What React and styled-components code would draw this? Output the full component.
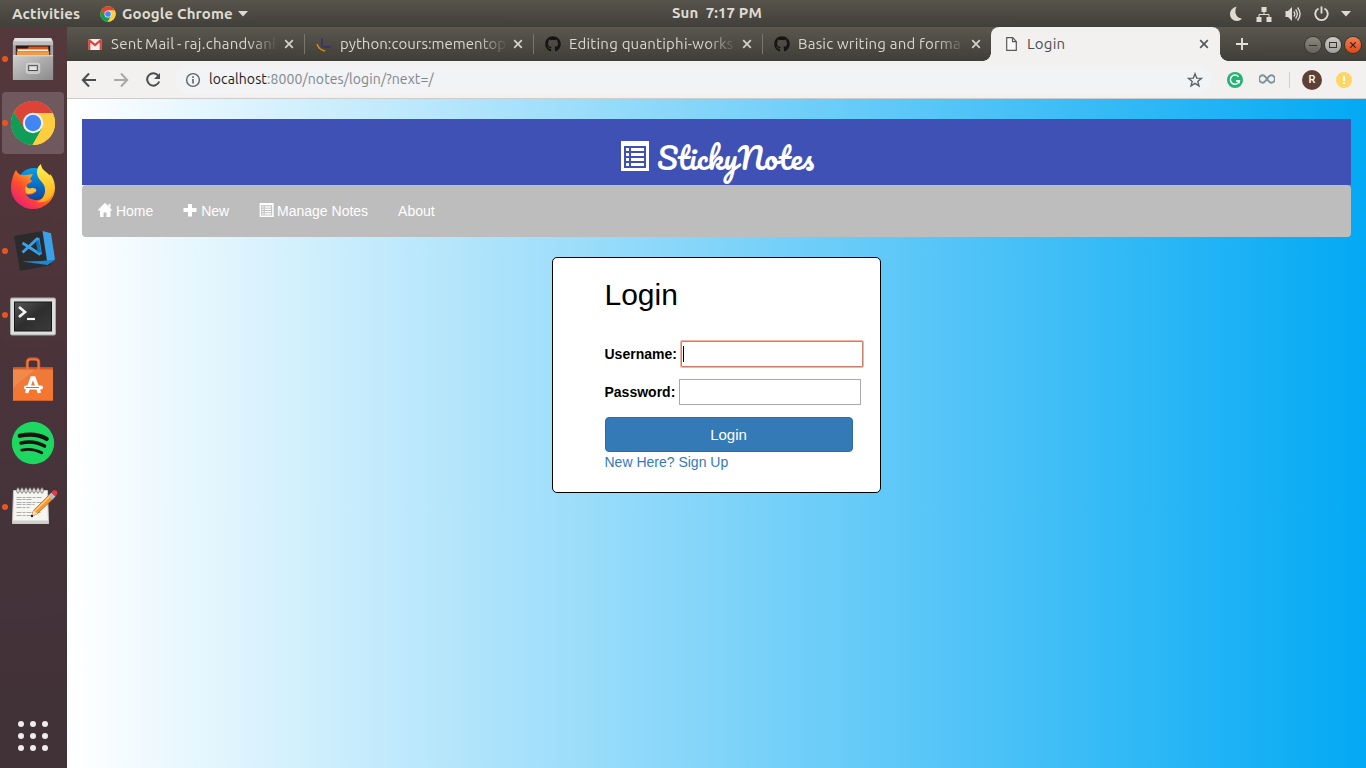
import React from 'react';
import styled, { createGlobalStyle, css } from 'styled-components';
import { FaGithub } from 'react-icons/fa';

const uiFont = '"Ubuntu", "Noto Sans", sans-serif';
const pageFont = '"Liberation Sans", Arial, sans-serif';

const Global = createGlobalStyle`
  *, *::before, *::after { box-sizing: border-box; }
  body { margin: 0; overflow: hidden; }
  svg { display: block; flex: none; }
`;

const Desktop = styled.div`
  width: 1366px;
  height: 768px;
  display: flex;
  flex-direction: column;
  font-family: ${uiFont};
`;

/* ---------- system bar ---------- */
const SystemBar = styled.header`
  height: 27px;
  flex: none;
  display: flex;
  align-items: center;
  padding: 0 15px 0 12px;
  background: linear-gradient(#57544b, #403f39);
  color: #dfdbd2;
  font-size: 15px;
  font-weight: 700;
  line-height: 26px;
  white-space: pre;
`;
const BarGroup = styled.div`
  display: flex;
  align-items: center;
  gap: ${p => p.$gap || 0}px;
`;
const BarText = styled.span`
  width: ${p => p.$w}px;
  letter-spacing: ${p => p.$ls || 0}px;
`;
const Clock = styled(BarText)`
  margin: -2px auto 0 424px;
`;
const AppMenu = styled.div`
  display: flex;
  align-items: center;
  gap: 6px;
`;

const Workspace = styled.div`
  flex: 1;
  display: flex;
  min-height: 0;
`;

/* ---------- dock ---------- */
const Dock = styled.aside`
  width: 67px;
  display: flex;
  flex-direction: column;
  background: linear-gradient(178deg, #54383c 0%, #4b343a 40%, #45333a 70%, #403237 100%);
`;
const DockItem = styled.div`
  height: 64px;
  display: flex;
  align-items: center;
  justify-content: center;
  padding: 1px 3px 1px 2px;
`;
const DockTile = styled.div`
  position: relative;
  width: 62px;
  height: 62px;
  display: flex;
  align-items: center;
  justify-content: center;
  border-radius: 4px;
  background: ${p => (p.$active ? '#6f595e' : 'transparent')};
`;
const RunningDot = styled.i`
  position: absolute;
  left: 0;
  top: 28px;
  width: 6px;
  height: 6px;
  border-radius: 50%;
  background: #e95420;
`;
const AppGrid = styled.div`
  margin: auto 0 17px 18px;
  display: grid;
  grid-template-columns: repeat(3, 6px);
  gap: 6px;
`;
const GridDot = styled.i`
  width: 6px;
  height: 6px;
  border-radius: 50%;
  background: #eeecec;
`;

/* ---------- browser ---------- */
const Browser = styled.section`
  flex: 1;
  display: flex;
  flex-direction: column;
  min-width: 0;
`;
const TabStrip = styled.div`
  height: 34px;
  flex: none;
  display: flex;
  padding-left: 8px;
  background: linear-gradient(#5a574e, #3f3e38);
`;
const Tab = styled.div`
  position: relative;
  width: 229px;
  height: 34px;
  display: flex;
  align-items: center;
  padding: 0 ${p => (p.$active ? 11 : 10)}px 0 12px;
  color: ${p => (p.$active ? '#4d4f51' : '#d9d6cf')};
  ${p => p.$active && css`
    background: #f2f1f0;
    border-radius: 8px 8px 0 0;
    &::before, &::after {
      content: '';
      position: absolute;
      bottom: 0;
      width: 8px;
      height: 8px;
    }
    &::before { left: -8px; background: radial-gradient(circle at 0 0, transparent 7.5px, #f2f1f0 8px); }
    &::after { right: -8px; background: radial-gradient(circle at 100% 0, transparent 7.5px, #f2f1f0 8px); }
  `}
  ${p => p.$divided && css`
    &::before {
      content: '';
      position: absolute;
      left: 0;
      top: 7px;
      width: 1px;
      height: 20px;
      background: #79766f;
    }
  `}
`;
const Favicon = styled.span`
  width: 16px;
  display: flex;
  justify-content: center;
  margin-right: 8px;
`;
const TabTitle = styled.span`
  flex: 1;
  height: 20px;
  margin-right: 6px;
  white-space: nowrap;
  font-size: 15px;
  line-height: 20px;
  letter-spacing: ${p => p.$ls || 0}px;
  word-spacing: ${p => p.$ws || 0}px;
  ${p => p.$fade && css`mask-image: linear-gradient(to right, #000 138px, transparent 168px);`}
`;
const NewTab = styled.div`
  width: 44px;
  display: flex;
  align-items: center;
  justify-content: center;
`;
const WindowButtons = styled.div`
  margin: 1px 5px 0 auto;
  display: flex;
  align-items: center;
  gap: 4px;
`;
const WindowButton = styled.span`
  width: 16px;
  height: 16px;
  border-radius: 50%;
  display: flex;
  align-items: center;
  justify-content: center;
  background: ${p => p.$bg};
  box-shadow: 0 0 0 1px #37352f;
`;

const Toolbar = styled.div`
  height: 38px;
  flex: none;
  display: flex;
  align-items: center;
  padding: 0 14px;
  background: #f2f1f0;
  border-bottom: 1px solid #cfcdcb;
`;
const NavButtons = styled.div`
  display: flex;
  gap: 16px;
  margin-right: 14px;
`;
const Omnibox = styled.div`
  width: 1037px;
  height: 29px;
  border-radius: 15px;
  background: #f1f3f5;
  display: flex;
  align-items: center;
  padding: 0 9px 0 10px;
`;
const Url = styled.span`
  flex: 1;
  margin: -2px 0 0 8px;
  font-size: 14px;
  line-height: 20px;
  letter-spacing: 0.11px;
  color: #80868b;
  b { font-weight: 400; color: #202124; }
`;
const Extensions = styled.div`
  display: flex;
  align-items: center;
  margin-left: 15px;
`;
const ToolbarRule = styled.span`
  width: 1px;
  height: 16px;
  margin: 0 12px 0 14px;
  background: #cfcfcf;
`;
const Avatar = styled.span`
  width: 20px;
  height: 20px;
  border-radius: 50%;
  background: #5d4037;
  color: #fff;
  font: 500 11px/20px Roboto, sans-serif;
  text-align: center;
`;
const Alert = styled.span`
  width: 16px;
  height: 16px;
  margin-left: 14px;
  border-radius: 50%;
  background: #fdd663;
  display: flex;
  align-items: center;
  justify-content: center;
`;

/* ---------- page ---------- */
const Page = styled.main`
  flex: 1;
  padding: 20px 15px;
  background: linear-gradient(to right, #fff, #03a9f4);
  font-family: ${pageFont};
  font-size: 14px;
  line-height: 20px;
`;
const Banner = styled.div`
  height: 66px;
  padding: 8px 0 0 2px;
  background: #3f51b5;
  color: #fff;
  display: flex;
  justify-content: center;
  align-items: center;
  gap: 8px;
`;
const Brand = styled.h1`
  width: 157px;
  margin: 0;
  padding-top: 3px;
  font: 400 30px/40px "Pacifico", cursive;
  white-space: nowrap;
`;
const Navbar = styled.nav`
  height: 52px;
  padding: 0 1px;
  display: flex;
  align-items: center;
  border-radius: 4px;
  background: #bdbdbd;
`;
const NavLink = styled.a`
  display: flex;
  align-items: center;
  gap: 3.9px;
  padding: 0 15px;
  color: #fff;
  svg { margin-bottom: 2px; }
`;
const Card = styled.div`
  width: 329px;
  height: 236px;
  margin: 20px auto 0;
  padding: 20px 0 0 51.5px;
  border: 1px solid #000;
  border-radius: 5px;
  background: #fff;
  color: #000;
`;
const CardTitle = styled.h2`
  margin: 0 0 30px;
  font-size: 30px;
  font-weight: 400;
  line-height: 33px;
`;
const Field = styled.label`
  height: 26px;
  margin-bottom: 12px;
  display: flex;
  align-items: center;
  gap: 3.9px;
  font-weight: 700;
`;
const TextBox = styled.span`
  width: 182px;
  height: 26px;
  padding: 4px 1px;
  display: flex;
  background: #fff;
  border: 1px solid ${p => (p.$focused ? '#c9806a' : '#a9a9a9')};
  ${p => p.$focused && css`box-shadow: 0 0 0 1px #f4b5a0; border-radius: 1px;`}
`;
const Caret = styled.i`
  width: 1px;
  height: 16px;
  background: #000;
`;
const Submit = styled.button`
  display: block;
  width: 248px;
  height: 35px;
  padding: 0;
  border: 1px solid #2e6da4;
  border-radius: 4px;
  background: #337ab7;
  color: #fff;
  font: 15px/20px ${pageFont};
`;
const SignUp = styled.a`
  color: #337ab7;
`;

/* ---------- drawings ---------- */
const ChromeLogo = ({ size }) => (
  <svg width={size} height={size} viewBox="0 0 48 48">
    <circle cx="24" cy="24" r="23" fill="#ffcd40" />
    <path d="M24 24 14 30 4 12.500A23 23 0 0 1 44.500 13.500H24Z" fill="#db4437" />
    <path d="M4 12.500A23 23 0 0 0 23.500 47L33.500 29.500 24 34.500 15 30Z" fill="#0f9d58" />
    <path d="M24 13.500H44.500A23 23 0 0 1 23.500 47L33.500 29.500Z" fill="#ffcd40" />
    <circle cx="24" cy="24" r="10.600" fill="#f4f4f4" />
    <circle cx="24" cy="24" r="8.500" fill="#4285f4" />
  </svg>
);

const FilesIcon = () => (
  <svg width="44" height="46" viewBox="0 0 46 48">
    <defs>
      <linearGradient id="fg" x1="0" y1="0" x2="1" y2="1">
        <stop offset="0" stopColor="#d0d0d0" /><stop offset=".5" stopColor="#ababab" /><stop offset="1" stopColor="#8b8b8b" />
      </linearGradient>
    </defs>
    <path d="M4 2h37l3 5v37H2V7Z" fill="#8c8c8c" />
    <path d="M4 2h38l2 4H2Z" fill="#e2e2e2" />
    <path d="M2 6h42v4H2Z" fill="#bdbdbd" />
    <path d="M2 10h3v10H2ZM41 10h3v10h-3Z" fill="#a5a5a5" />
    <path d="M5 10h36v11H5Z" fill="#241c1a" />
    <path d="M6 13h11l2-2h20v4H6Z" fill="#d9541e" />
    <path d="M7 14h32v2H7Z" fill="#fff1d6" />
    <path d="M6 16h34v5H6Z" fill="#ef9a46" />
    <path d="M2 20h42v26H2Z" fill="url(#fg)" />
    <path d="M2 20h42v1H2Z" fill="#dedede" />
    <rect x="16" y="28.500" width="14" height="10.500" rx="2" fill="#c4c4c4" stroke="#d8d8d8" />
    <rect x="18.500" y="31" width="9" height="5" fill="#e4e4e4" stroke="#444" />
  </svg>
);

const FirefoxIcon = () => (
  <svg width="46" height="46" viewBox="0 0 46 46">
    <defs>
      <linearGradient id="ff" x1="1" y1="0" x2=".1" y2="1">
        <stop offset="0" stopColor="#fff44f" /><stop offset=".35" stopColor="#ff9a1f" /><stop offset=".62" stopColor="#ff4a30" /><stop offset="1" stopColor="#e31587" />
      </linearGradient>
      <linearGradient id="fb" x1="0" y1="0" x2="0" y2="1">
        <stop offset="0" stopColor="#00a1f2" /><stop offset="1" stopColor="#143d95" />
      </linearGradient>
      <linearGradient id="fy" x1="0" y1="0" x2="0" y2="1">
        <stop offset="0" stopColor="#fff44f" /><stop offset="1" stopColor="#ffa61a" />
      </linearGradient>
    </defs>
    <circle cx="24" cy="21" r="17" fill="url(#fb)" />
    <path d="M6 6C4 9 1 16 1 24a22 21 0 0 0 44 0c0-6-2-11-5-14l-4 20c-4 9-17 7-20 0 4 2 7 0 10-2 1-2-1-4-4-3-4 1-6-2-5-4 1-2 4-2 5-4l-2-2 3-5-7 1-4 0c-2 0-5-2-6-5Z" fill="url(#ff)" />
    <path d="M31 0c-4 3-5 8-3 13 2 4 8 7 7 15-1 6-5 9-9 10 11 2 18-5 18-14 0-8-3-12-8-16-3-2-5-5-5-8Z" fill="url(#fy)" />
    <path d="M16 29c4 2 7 0 10-2 1-2-1-3-4-3-3 1-5 0-6-2l-1 3Z" fill="#ffbd3b" />
  </svg>
);

const CodeIcon = () => (
  <svg width="46" height="46" viewBox="-.5 .5 46 46">
    <path d="m3.500 8.500 28.500-5 8.500 34L9.500 43.500Z" fill="#2b2b2e" />
    <path d="m32 3.500 8.500 2.200L44.500 32 37 36.500Z" fill="#3ba0e8" />
    <path d="m31 33.500 13.500-1.500-7.500 5.500L11.500 34Z" fill="#1a88d3" />
    <path d="M27.500 10.500 30 27M12 15.500 30 27M12 25 27.500 10.500" stroke="#3ba0e8" strokeWidth="2.800" fill="none" />
    <path d="m27 13 2 12" stroke="#0e75bd" strokeWidth="3.200" />
  </svg>
);

const TerminalIcon = () => (
  <svg width="46" height="42" viewBox="0 -3 46 42">
    <defs><linearGradient id="tg" x1="0" y1="0" x2="1" y2="1"><stop offset="0" stopColor="#555" /><stop offset=".5" stopColor="#2e2e2e" /><stop offset="1" stopColor="#3b3b3b" /></linearGradient></defs>
    <rect x=".5" y="1" width="45" height="37" rx="1.500" fill="#dedede" stroke="#aaa" />
    <rect x="4" y="4.500" width="38" height="30" fill="#171717" />
    <rect x="5" y="5.500" width="36" height="28" fill="url(#tg)" />
    <path d="m9 10 6 5-6 5" fill="none" stroke="#f4f4f4" strokeWidth="2.600" />
    <path d="M17 22h8" stroke="#f4f4f4" strokeWidth="2.200" />
  </svg>
);

const SoftwareIcon = () => (
  <svg width="46" height="46" viewBox="0 -.5 44 46">
    <path d="M16 15V6q0-4 4-4h4q4 0 4 4v9" fill="none" stroke="#c64f1e" strokeWidth="2.600" />
    <path d="M2 11h40v33H2Z" fill="#f07838" /><path d="M2 11h40v2H2Z" fill="#cf5c28" />
    <path d="M2 13h22L2 31Z" fill="#f39455" opacity=".6" />
    <path d="M2 34h40v10H2Z" fill="#f4762f" />
    <path d="M16.500 14V6q0-3 3-3h5q3 0 3 3v8" fill="none" stroke="#ef7840" strokeWidth="2" />
    <path d="m15.500 36.500 5.500-15h2l5.500 15" fill="none" stroke="#fff" strokeWidth="3.500" />
    <rect x="13" y="29" width="19" height="4" rx="2" fill="#fff" />
    <path d="M15 31h13" stroke="#e86526" />
  </svg>
);

const SpotifyIcon = () => (
  <svg width="44" height="44" viewBox="0 0 43 43">
    <circle cx="21.500" cy="21.500" r="20.700" fill="#1ed760" />
    <g fill="none" stroke="#191414" strokeLinecap="round">
      <path d="M8.500 14.500c9-2 19-1.500 26.500 3" strokeWidth="4" />
      <path d="M9.800 21.500c8-2 16-1 23 3" strokeWidth="3.400" />
      <path d="M10.500 28.500c7-1.700 13-1 19.500 2.500" strokeWidth="2.800" />
    </g>
  </svg>
);

const NotesIcon = () => (
  <svg width="50" height="40" viewBox="-2.500 .5 50 40">
    <path d="M3 4h34l1 33H2Z" fill="#f5f5f2" stroke="#c9c9c4" />
    <path d="M2 34h36v3H2Z" fill="#cfd0c9" />
    {[0, 1, 2, 3, 4, 5, 6].map(i => (
      <ellipse key={i} cx={7.500 + i * 4} cy="4" rx="1.300" ry="2.700" fill="#eee" stroke="#777" strokeWidth=".9" />
    ))}
    <path d="M6 11h26M6 13h16M6 16h26M6 18h18M6 21h13M6 26h24M6 29h17" stroke="#a5a5a5" strokeWidth=".9" strokeDasharray="5 1 3 1" />
    <path d="m21 30 2-6L39 8l4 4-16 15Z" fill="#f29a35" stroke="#a9601b" strokeWidth=".7" />
    <path d="m24 25 16-16" stroke="#ffd08a" strokeWidth="1.200" />
    <path d="m21 30 2-6 4 3Z" fill="#f3dfbd" /><circle cx="21.500" cy="29.500" r="1.200" fill="#222" />
    <path d="m38 9 3-3 4 4-3 3Z" fill="#b9bcc0" />
    <path d="m41 6 1.500-2q3-1 4 1t-.5 3.500L45 10Z" fill="#e33b42" />
  </svg>
);

const DownCaret = () => (
  <svg width="10" height="6" viewBox="0 0 10 6"><path d="M0 0h10L5 5.500Z" fill="#dfdbd2" /></svg>
);
const Moon = () => (
  <svg width="16" height="16" viewBox="0 0 16 16"><path d="M8.500.700C5.500 1 2 4 2 8c0 4 3 7 7 7 2 0 4-1 5-2.500C9 12.500 5.500 7 8.500.700Z" fill="#dfdbd2" /></svg>
);
const Network = () => (
  <svg width="16" height="16" viewBox="0 0 16 16"><path d="M5.500 1h5v5h-5ZM.500 11h5v5h-5ZM10.500 11h5v5h-5Z" fill="#dfdbd2" /><path d="M8 5v4M3 11V8.500h10V11" fill="none" stroke="#dfdbd2" /></svg>
);
const Sound = () => (
  <svg width="16" height="16" viewBox="0 0 16 16"><path d="M.500 5H3l4-4v14l-4-4H.500Z" fill="#dfdbd2" /><path d="M8.800 5.500q2 2.500 0 5M10.600 3.500q3.500 4.500 0 9M12.600 1.500q5 6.500 0 13" fill="none" stroke="#dfdbd2" strokeWidth="1.300" /></svg>
);
const Power = () => (
  <svg width="16" height="16" viewBox="-.5 0 16 16"><path d="M5 2.500a6.200 6.200 0 1 0 6 0M8 .500v7" fill="none" stroke="#dfdbd2" strokeWidth="1.900" /></svg>
);

const Cross = ({ color }) => (
  <svg width="10" height="10" viewBox="0 0 10 10"><path d="m1.200 1.200 7.600 7.600M8.800 1.200 1.200 8.800" stroke={color} strokeWidth="1.700" /></svg>
);
const GmailIcon = () => (
  <svg width="14" height="11" viewBox="0 0 14 11"><path d="M0 0h14v11H0Z" fill="#f1efed" /><path d="M1.200 11V1.200L7 6l5.800-4.800V11" fill="none" stroke="#dc4338" strokeWidth="2.200" /></svg>
);
const MoonArc = () => (
  <svg width="16" height="16" viewBox="0 0 16 16"><path d="M1 8q2 6 8 7" fill="none" stroke="#d9920f" strokeWidth="1.400" /><path d="M6 2v8q2 2 9 .500" fill="none" stroke="#36336e" strokeWidth="1.600" /></svg>
);
const BlankPage = () => (
  <svg width="11" height="14" viewBox="0 0 11 14"><path d="M.700.700h6L10.300 4.500v8.800H.700Z" fill="#fafafa" stroke="#5a5a5a" strokeWidth="1.200" /><path d="M6.500 1v3.700h3.700" fill="none" stroke="#5a5a5a" strokeWidth="1.200" /></svg>
);
const Arrow = ({ color, flip }) => (
  <svg width="16" height="16" viewBox="0 0 16 16"><path transform={flip ? 'translate(16) scale(-1 1)' : undefined} d="M15 8H2M8 1.500 1.800 8 8 14.500" fill="none" stroke={color} strokeWidth="2" /></svg>
);
const Reload = () => (
  <svg width="16" height="16" viewBox="0 0 16 16"><path d="M13.500 4A6.200 6.200 0 1 0 14.200 9.500" fill="none" stroke="#4b4d4f" strokeWidth="2" /><path d="M15 1v6H9Z" fill="#4b4d4f" /></svg>
);
const Info = () => (
  <svg width="16" height="16" viewBox="0 0 16 16"><circle cx="8" cy="8" r="6.400" fill="none" stroke="#5f6368" strokeWidth="1.400" /><path d="M8 7v4.500M8 4.300v1.600" stroke="#5f6368" strokeWidth="1.600" /></svg>
);
const Star = () => (
  <svg width="16" height="16" viewBox="0 0 16 16"><path d="m8 1.800 1.700 4.300 4.700.300-3.600 3 1.200 4.500-4-2.500-4 2.500 1.200-4.500-3.600-3 4.700-.300Z" fill="none" stroke="#5f6368" strokeWidth="1.400" /></svg>
);
const Grammarly = () => (
  <svg width="16" height="16" viewBox="0 0 16 16"><circle cx="8" cy="8" r="8" fill="#21b573" /><path d="M11.500 4.700A4.600 4.600 0 1 0 12.400 9H9" fill="none" stroke="#fff" strokeWidth="1.500" /><path d="M9 8.300h4v3.500Z" fill="#fff" /></svg>
);
const InfinityLoop = styled(({ className }) => (
  <svg className={className} width="16" height="10" viewBox="0 0 16 10"><path d="M8 5C6 2 5 1.300 3.800 1.300a3.700 3.700 0 0 0 0 7.400C5 8.700 6 8 8 5s3-3.700 4.200-3.700a3.700 3.700 0 0 1 0 7.400C11 8.700 10 8 8 5Z" fill="none" stroke="#7d939b" strokeWidth="2" /></svg>
))`
  margin: -1px 0 0 16px;
`;

const ListAlt = ({ w, h, shift = 0 }) => (
  <svg width={w} height={h} viewBox={`${-shift} 0 28 30`} preserveAspectRatio="none" fill="currentColor" overflow="visible">
    <path fillRule="evenodd" d="M0 0h28v30H0ZM3 5v22h22V5Z" />
    {[7, 12, 17, 22].map(y => (
      <React.Fragment key={y}><rect x="5" y={y} width="3" height="3" /><rect x="10" y={y} width="13" height="3" /></React.Fragment>
    ))}
  </svg>
);
const HomeGlyph = () => (
  <svg width="14" height="14" viewBox="0 0 14 14" fill="currentColor" overflow="visible"><path d="M7-.3 14.500 7.500H12.500V14H8.500V9.500h-3V14H2V7.500H-.500L7-.3ZM10.500 1h2v4l-2-2Z" /></svg>
);
const PlusGlyph = () => (
  <svg width="14" height="14" viewBox="0 0 14 14" fill="currentColor"><path d="M5 1h4v4h4.500v4H9v4.500H5V9H.500V5H5Z" /></svg>
);

const dockApps = [
  { icon: <FilesIcon />, running: true },
  { icon: <ChromeLogo size={46} />, running: true, active: true },
  { icon: <FirefoxIcon /> },
  { icon: <CodeIcon />, running: true },
  { icon: <TerminalIcon />, running: true },
  { icon: <SoftwareIcon /> },
  { icon: <SpotifyIcon /> },
  { icon: <NotesIcon />, running: true },
];

const tabs = [
  { title: 'Sent Mail - raj.chandvani', icon: <GmailIcon />, ls: 0.27, ws: -1.3 },
  { title: 'python:cours:mementop', icon: <MoonArc />, ls: 0 },
  { title: 'Editing quantiphi-works', icon: <FaGithub size={16} color="#161514" />, ls: 0.22 },
  { title: 'Basic writing and forma', icon: <FaGithub size={16} color="#161514" />, ls: 0.2 },
];

export default function App() {
  return (
    <Desktop>
      <Global />
      <SystemBar>
        <BarGroup $gap={20}>
          <BarText $w={68} $ls={0.15}>Activities</BarText>
          <AppMenu>
            <ChromeLogo size={16} />
            <BarText $w={110} $ls={0.13}>Google Chrome</BarText>
            <DownCaret />
          </AppMenu>
        </BarGroup>
        <Clock $w={92} $ls={0.1}>Sun  7:17 PM</Clock>
        <BarGroup $gap={12}>
          <BarGroup $gap={12.3}><Moon /><Network /><Sound /><Power /></BarGroup>
          <DownCaret />
        </BarGroup>
      </SystemBar>
      <Workspace>
        <Dock>
          {dockApps.map((app, i) => (
            <DockItem key={i}>
              <DockTile $active={app.active}>
                {app.running && <RunningDot />}
                {app.icon}
              </DockTile>
            </DockItem>
          ))}
          <AppGrid>{Array.from({ length: 9 }, (_, i) => <GridDot key={i} />)}</AppGrid>
        </Dock>
        <Browser>
          <TabStrip>
            {tabs.map((t, i) => (
              <Tab key={t.title} $divided={i > 0}>
                <Favicon>{t.icon}</Favicon>
                <TabTitle $fade $ls={t.ls} $ws={t.ws}>{t.title}</TabTitle>
                <Cross color="#d5d2cb" />
              </Tab>
            ))}
            <Tab $active>
              <Favicon><BlankPage /></Favicon>
              <TabTitle $ls={0.2}>Login</TabTitle>
              <Cross color="#55575a" />
            </Tab>
            <NewTab>
              <svg width="12" height="12" viewBox="0 0 12 12"><path d="M6 0v12M0 6h12" stroke="#e3e0d9" strokeWidth="1.900" /></svg>
            </NewTab>
            <WindowButtons>
              <WindowButton $bg="linear-gradient(#8b887f, #65635b)">
                <svg width="8" height="8" viewBox="0 0 8 8"><path d="M0 4.500h8" stroke="#35342f" /></svg>
              </WindowButton>
              <WindowButton $bg="linear-gradient(#cdcbc8, #a19f9b)">
                <svg width="8" height="6" viewBox="0 0 8 6"><rect x=".5" y=".5" width="7" height="5" fill="none" stroke="#35342f" /></svg>
              </WindowButton>
              <WindowButton $bg="linear-gradient(#f37e56, #dd4814)">
                <svg width="6" height="6" viewBox="0 0 6 6"><path d="m.300.300 5.400 5.400M5.700.300.300 5.700" stroke="#35231b" strokeWidth="1.200" /></svg>
              </WindowButton>
            </WindowButtons>
          </TabStrip>
          <Toolbar>
            <NavButtons>
              <Arrow color="#4b4d4f" />
              <Arrow color="#a8a9a9" flip />
              <Reload />
            </NavButtons>
            <Omnibox>
              <Info />
              <Url><b>localhost</b>:8000/notes/login/?next=/</Url>
              <Star />
            </Omnibox>
            <Extensions>
              <Grammarly />
              <InfinityLoop />
              <ToolbarRule />
              <Avatar>R</Avatar>
              <Alert><svg width="4" height="8" viewBox="0 0 4 8"><path d="M2 0v5M2 6.200V8" stroke="#fff" strokeWidth="1.900" /></svg></Alert>
            </Extensions>
          </Toolbar>
          <Page>
            <Banner>
              <ListAlt w={28} h={30} />
              <Brand>StickyNotes</Brand>
            </Banner>
            <Navbar>
              <NavLink><HomeGlyph />Home</NavLink>
              <NavLink><PlusGlyph />New</NavLink>
              <NavLink><ListAlt w={14} h={14} shift={1.3} />Manage Notes</NavLink>
              <NavLink>About</NavLink>
            </Navbar>
            <Card>
              <CardTitle>Login</CardTitle>
              <Field>Username: <TextBox $focused><Caret /></TextBox></Field>
              <Field>Password: <TextBox /></Field>
              <Submit>Login</Submit>
              <SignUp>New Here? Sign Up</SignUp>
            </Card>
          </Page>
        </Browser>
      </Workspace>
    </Desktop>
  );
}
